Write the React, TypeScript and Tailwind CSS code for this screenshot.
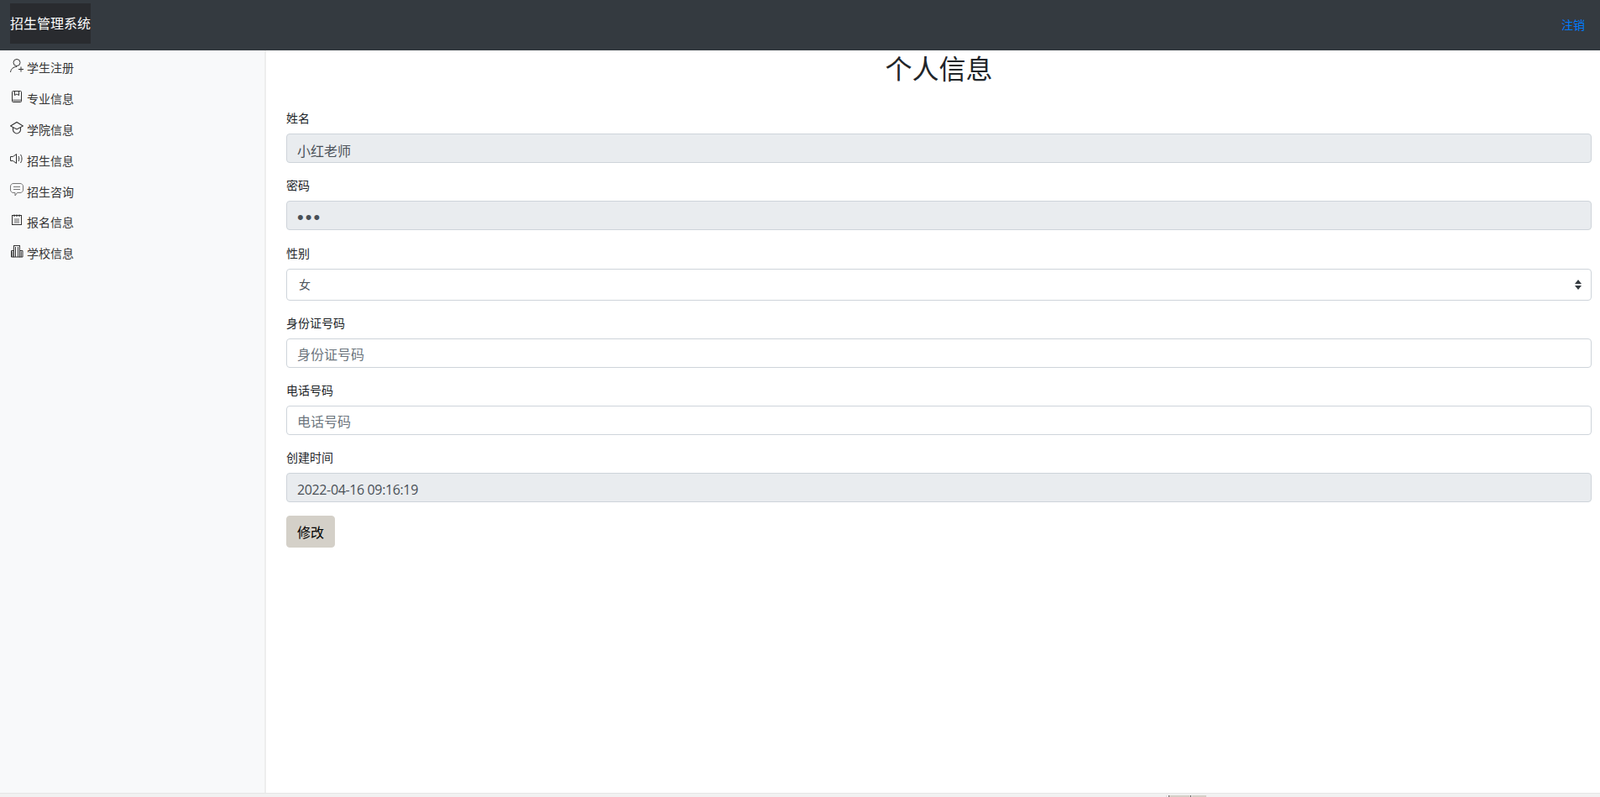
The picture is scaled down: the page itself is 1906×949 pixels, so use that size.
import type { ReactNode } from 'react'

function PersonPlusIcon() {
  return (
    <svg className="w-4 h-4 mr-1 -mt-[6px] shrink-0" viewBox="0 0 16 16" fill="none" stroke="#333" strokeWidth="1">
      <circle cx="8" cy="4.5" r="4" />
      <path d="M0.5 16 C1 12 4 9.5 8 9.5" />
      <path d="M13 9.5 V15.5 M10 12.5 H16" />
    </svg>
  )
}

function BookIcon() {
  return (
    <svg className="w-4 h-4 mr-1 -mt-[6px] shrink-0" viewBox="0 0 16 16" fill="none" stroke="#333" strokeWidth="1">
      <rect x="2.5" y="1.5" width="11" height="13" rx="1" />
      <path d="M5.5 1.5 V6.5 L8 5 L10.5 6.5 V1.5" />
      <rect x="3" y="11.5" width="10" height="2" fill="#888" stroke="none" />
    </svg>
  )
}

function CapIcon() {
  return (
    <svg className="w-4 h-4 mr-1 -mt-[6px] shrink-0" viewBox="0 0 16 16" fill="none" stroke="#333" strokeWidth="1.1">
      <path d="M0.5 6 L8 1.5 L15.5 6 L8 10 Z" />
      <path d="M3.5 8 V10.5 C3.5 13 6 15 8 15 C10 15 12.5 13 12.5 10.5 V8" />
    </svg>
  )
}

function SpeakerIcon() {
  return (
    <svg className="w-4 h-4 mr-1 -mt-[6px] shrink-0" viewBox="0 0 16 16" fill="none" stroke="#333" strokeWidth="1">
      <path d="M0.5 5.5 H3.5 L7.5 2.5 V13.5 L3.5 10.5 H0.5 Z" />
      <path d="M10 5 C11 6.5 11 9.5 10 11" />
      <path d="M12.5 3 C14.5 6 14.5 10 12.5 13" />
    </svg>
  )
}

function ChatIcon() {
  return (
    <svg className="w-4 h-4 mr-1 -mt-[6px] shrink-0" viewBox="0 0 16 16" fill="none" stroke="#777" strokeWidth="1">
      <path d="M4 0.5 H12 C14 0.5 15.5 2 15.5 4 V8 C15.5 10 14 11.5 12 11.5 H8.5 L6 15 V11.5 H4 C2 11.5 0.5 10 0.5 8 V4 C0.5 2 2 0.5 4 0.5 Z" />
      <path d="M4 4.5 H12 M4 7.5 H12" />
    </svg>
  )
}

function FormIcon() {
  return (
    <svg className="w-4 h-4 mr-1 -mt-[6px] shrink-0" viewBox="0 0 16 16" fill="none" stroke="#333" strokeWidth="1">
      <rect x="2.5" y="2.5" width="11" height="11" />
      <path d="M5 1.5 V4 M8 1.5 V4 M11 1.5 V4" strokeWidth="1.2" />
      <path d="M5 7 H11 M5 9 H11 M5 11 H11" stroke="#666" />
    </svg>
  )
}

function BuildingIcon() {
  return (
    <svg className="w-4 h-4 mr-1 -mt-[6px] shrink-0" viewBox="0 0 16 16" fill="none" stroke="#333" strokeWidth="1">
      <rect x="4.5" y="1.5" width="7" height="13.5" />
      <path d="M6.5 3 V15 M9.5 3 V15" />
      <path d="M4.5 7.5 H1.5 V15 H4.5 M2.9 8.5 V15" />
      <path d="M11.5 7.5 H15 V15 H11.5 M13.2 8.5 V15" />
    </svg>
  )
}

const menu = [
  { label: '学生注册', icon: <PersonPlusIcon /> },
  { label: '专业信息', icon: <BookIcon /> },
  { label: '学院信息', icon: <CapIcon /> },
  { label: '招生信息', icon: <SpeakerIcon /> },
  { label: '招生咨询', icon: <ChatIcon /> },
  { label: '报名信息', icon: <FormIcon /> },
  { label: '学校信息', icon: <BuildingIcon /> },
]

const disabledInput = 'block w-full h-[35px] px-3 pt-[4px] bg-[#e9ecef] border border-[#ced4da] rounded text-[#495057]'
const normalInput = 'block w-full h-[35px] px-3 pt-[4px] bg-white border border-[#ced4da] rounded text-base text-[#495057] placeholder:text-[#6c757d]'

function Field({ label, className, children }: { label: string; className: string; children: ReactNode }) {
  return (
    <div className={className}>
      <label className="block mb-[7px] text-sm leading-[21px] text-[#212529]">{label}</label>
      {children}
    </div>
  )
}

export default function App() {
  return (
    <div className="h-[949px] flex flex-col overflow-hidden bg-white font-['Liberation_Sans','Noto_Sans_CJK_SC',sans-serif] text-[#212529]">
      {/* Navbar */}
      <div className="h-[60px] shrink-0 bg-[#343a40] flex items-center justify-between pl-3 pr-[18px]">
        <div className="h-[48px] mb-1 pt-[2px] flex items-center bg-[#292b2f] text-base text-white">招生管理系统</div>
        <a className="text-sm text-[#007bff]" href="#">注销</a>
      </div>

      <div className="flex flex-1 min-h-0">
        {/* Sidebar */}
        <div className="w-[317px] shrink-0 bg-[#f8f9fa] border-r-2 border-[#eeeeee] pt-[3px]">
          {menu.map((item) => (
            <div key={item.label} className="h-[36.8px] flex items-center pl-3 text-sm text-[#333333]">
              {item.icon}
              <span>{item.label}</span>
            </div>
          ))}
        </div>

        {/* Content */}
        <div className="flex-1 pl-[24px] pr-[10px]">
          <h1 className="text-center text-[32px] leading-[44px] h-[44px] mt-[1px] mb-[26px]">个人信息</h1>
          <Field label="姓名" className="mb-[17px]">
            <input className={`${disabledInput} text-base`} disabled defaultValue="小红老师" />
          </Field>
          <Field label="密码" className="mb-[18px]">
            <input className={`${disabledInput} text-[22px] tracking-[2px]`} disabled type="password" defaultValue="123" />
          </Field>
          <Field label="性别" className="mb-[17px]">
            <div className="relative">
              <select className="block w-full h-[38px] pl-[14px] pr-3 appearance-none bg-white border border-[#ced4da] rounded text-sm text-[#495057]" defaultValue="女">
                <option>女</option>
                <option>男</option>
              </select>
              <svg className="absolute right-[12px] top-[13px] w-[8px] h-[12px]" viewBox="0 0 8 12">
                <path d="M4 0 L8 5 H0 Z M4 12 L0 7 H8 Z" fill="#343a40" />
              </svg>
            </div>
          </Field>
          <Field label="身份证号码" className="mb-[17px]">
            <input className={normalInput} placeholder="身份证号码" />
          </Field>
          <Field label="电话号码" className="mb-[17px]">
            <input className={normalInput} placeholder="电话号码" />
          </Field>
          <Field label="创建时间" className="mb-[16px]">
            <input className={`${disabledInput} text-base font-['Open_Sans',sans-serif] tracking-[-0.37px]`} disabled defaultValue="2022-04-16 09:16:19" />
          </Field>
          <button className="h-[38px] w-[58px] pt-[3px] rounded bg-[#d4d0c8] border border-[#d4d0c8] text-base text-black">修改</button>
        </div>
      </div>

      {/* Bottom strip */}
      <div className="h-[5px] shrink-0 flex items-end pl-[1389px] bg-[#f1f1f1] border-t border-[#e6e6e6]">
        <div className="w-[1px] h-[2px] bg-[#dddddd] mr-[2px]" />
        <div className="w-[1px] h-[2px] bg-[#666666]" />
        <div className="w-[25px] h-[2px] bg-[#d4d0c8]" />
        <div className="w-[1px] h-[2px] bg-[#666666] mr-[1px]" />
        <div className="w-[17px] h-[2px] bg-[#d4d0c8]" />
      </div>
    </div>
  )
}
